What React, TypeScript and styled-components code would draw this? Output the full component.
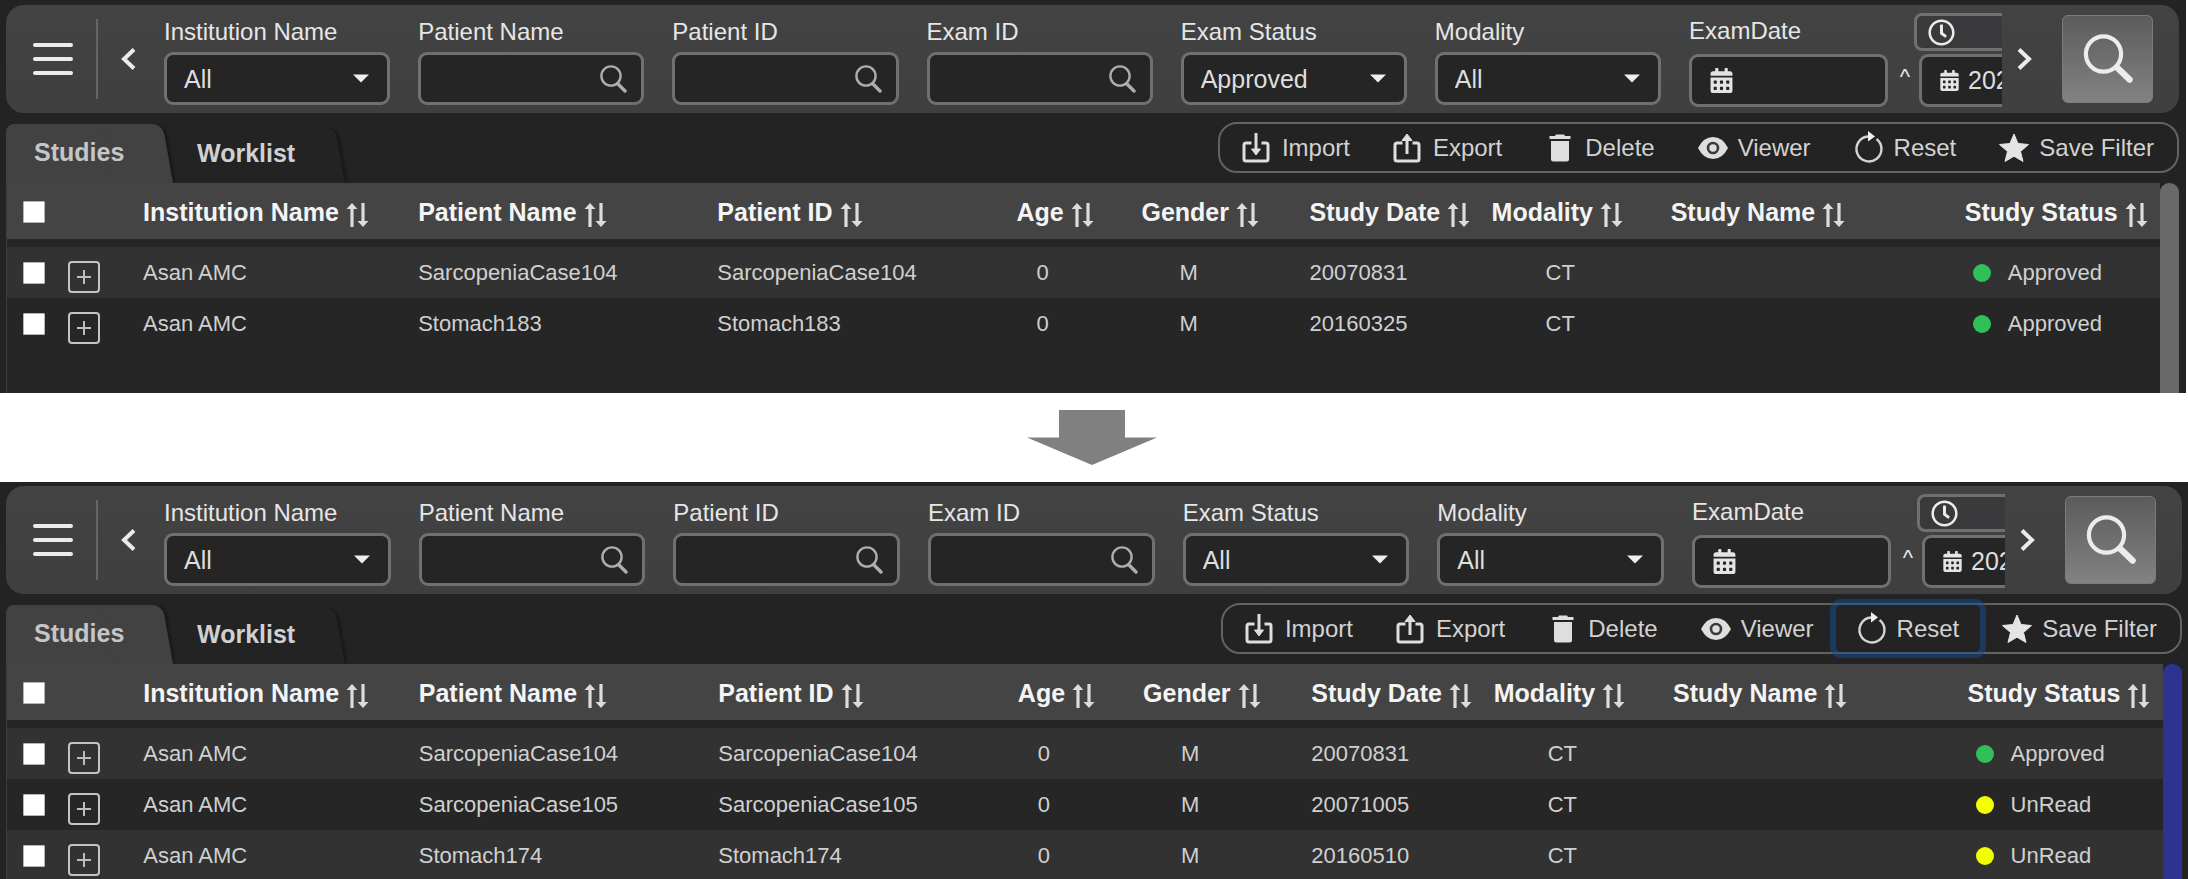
import React, { useId } from "react";
import styled, { createGlobalStyle } from "styled-components";
import { FaCalendarAlt, FaRegClock } from "react-icons/fa";

const GlobalStyle = createGlobalStyle`
  *, *::before, *::after { box-sizing: border-box; }
  body { margin: 0; background: #fff; }
  body, button, input, select { font-family: "Liberation Sans", Arial, sans-serif; }
`;

const Page = styled.main`
  display: flex;
  flex-direction: column;
  height: 100vh;
  overflow: hidden;
`;

const Panel = styled.section<{ $fill?: boolean }>`
  display: flex;
  flex-direction: column;
  flex: ${(p) => (p.$fill ? "1 1 0" : "none")};
  min-height: ${(p) => (p.$fill ? "0" : "393px")};
  overflow: hidden;
  margin-right: ${(p) => (p.$fill ? "0" : "2px")};
  padding: ${(p) => (p.$fill ? "4px 6px 0" : "5px 7px 0 6px")};
  background: #232323;
  color: #e6e6e6;
`;

const Transition = styled.div`
  display: flex;
  flex: none;
  align-items: center;
  justify-content: center;
  height: 89px;
  padding-right: 4px;
`;

const FilterBar = styled.form`
  display: flex;
  flex: none;
  align-items: center;
  height: 108px;
  border-radius: 18px;
  background: linear-gradient(#434343, #3f3f3f);
`;

const IconButton = styled.button`
  display: flex;
  flex: none;
  align-items: center;
  justify-content: center;
  padding: 0;
  border: 0;
  background: none;
  color: #ececec;
`;

const MenuButton = styled(IconButton)`
  width: 90px;
  height: 80px;
  padding-left: 3px;
`;

const Divider = styled.span`
  flex: none;
  width: 2px;
  height: 80px;
  background: #666;
`;

const PrevButton = styled(IconButton)`
  width: 60px;
  height: 80px;
`;

const NextButton = styled(IconButton)`
  width: 45px;
  height: 80px;
`;

const SearchButton = styled(IconButton)`
  width: 91px;
  height: 88px;
  margin: 0 26px 0 15px;
  border: 1px solid #7c7c7c;
  border-radius: 6px;
  background: linear-gradient(#5c5c5c, #828282);
`;

const Strip = styled.div`
  display: flex;
  flex: 1 1 0;
  min-width: 0;
  align-self: stretch;
  align-items: flex-start;
  gap: 28px;
  margin-left: 6px;
  overflow: hidden;
`;

const Field = styled.div`
  display: flex;
  flex: 1 1 0;
  min-width: 0;
  flex-direction: column;
  gap: 6px;
  padding-top: 13px;
`;

const Label = styled.label`
  font-size: 24px;
  line-height: 28px;
  white-space: nowrap;
`;

const Control = styled.div<{ $width?: number }>`
  position: relative;
  display: flex;
  flex: none;
  align-items: center;
  width: ${(p) => (p.$width ? `${p.$width}px` : "100%")};
  height: 53px;
  border: 3px solid #707070;
  border-radius: 9px;
  background: #252525;
  overflow: hidden;
`;

const Select = styled.select`
  width: 100%;
  height: 100%;
  padding: 0 40px 0 17px;
  border: 0;
  appearance: none;
  background: none;
  color: #dedede;
  font-size: 25px;
`;

const Caret = styled.svg`
  position: absolute;
  right: 18px;
  top: 19px;
  pointer-events: none;
`;

const TextInput = styled.input`
  flex: 1 1 0;
  min-width: 0;
  height: 100%;
  padding: 0 0 0 17px;
  border: 0;
  outline: 0;
  background: none;
  color: #dedede;
  font-size: 25px;
`;

const FieldSearch = styled(IconButton)`
  width: 28px;
  height: 28px;
  margin: 0 14px 0 0;
  color: #adadad;
`;

const DateGroup = styled.div`
  display: flex;
  flex: 0 0 313px;
  flex-direction: column;
  gap: 3px;
  padding-top: 8px;
  overflow: hidden;
`;

const DateRow = styled.div`
  display: flex;
  align-items: center;
`;

const DateLabel = styled(Label)`
  flex: 0 0 225px;
  padding-bottom: 2px;
`;

const ClockButton = styled(IconButton)`
  justify-content: flex-start;
  width: 230px;
  height: 38px;
  padding-left: 11px;
  border: 3px solid #707070;
  border-radius: 8px;
  background: #3a3a3c;
`;

const DateControl = styled(Control)`
  padding-left: 17px;
`;

const DateInput = styled(TextInput)`
  padding-left: 8px;
`;

const RangeMark = styled.span`
  flex: 0 0 31px;
  padding: 0 0 8px 3px;
  text-align: center;
  font-size: 22px;
  line-height: 28px;
`;

const TabBar = styled.div`
  display: flex;
  flex: none;
  justify-content: space-between;
  height: 70px;
`;

const Tabs = styled.div`
  display: flex;
  align-items: flex-end;
`;

const Tab = styled.button<{ $active?: boolean }>`
  position: relative;
  isolation: isolate;
  z-index: ${(p) => (p.$active ? 1 : 0)};
  width: ${(p) => (p.$active ? "167px" : "172px")};
  height: ${(p) => (p.$active ? "59px" : "56px")};
  padding: 0 0 3px ${(p) => (p.$active ? "28px" : "24px")};
  border: 0;
  background: none;
  color: ${(p) => (p.$active ? "#c6c6c6" : "#d0d0d0")};
  font-size: 25px;
  font-weight: bold;
  text-align: left;

  &::before,
  &::after {
    content: "";
    position: absolute;
    z-index: -1;
    top: 0;
    bottom: 0;
    background: ${(p) => (p.$active ? "#424242" : "#232323")};
  }
  &::before {
    left: 0;
    right: 40px;
    border-radius: 8px 0 0 0;
  }
  &::after {
    right: 0;
    width: 60px;
    border-radius: 0 10px 0 0;
    transform: skewX(10deg);
    transform-origin: bottom;
    box-shadow: 3px 0 3px -1px #161616;
    clip-path: inset(0 -8px 0 0);
  }
`;

const Toolbar = styled.div`
  display: flex;
  gap: 1px;
  height: 51px;
  margin-top: 9px;
  padding: 0 2px 0 1px;
  border: 2px solid #636363;
  border-radius: 19px;
`;

const ToolButton = styled.button<{ $focused?: boolean }>`
  display: flex;
  align-items: center;
  gap: 10px;
  padding: 0 21px;
  border: 0;
  border-radius: 5px;
  background: none;
  color: #d2d2d2;
  font-size: 24px;
  line-height: 28px;
  box-shadow: ${(p) => (p.$focused ? "0 0 0 6px rgba(20, 80, 150, 0.5)" : "none")};
`;

const TableArea = styled.div`
  display: flex;
  flex: 1 1 0;
  min-height: 0;
  border-left: 1px solid #3c3c3c;
`;

const TableScroll = styled.div`
  flex: 1 1 0;
  min-width: 0;
  overflow: hidden;
  background: #262626;
`;

const ScrollThumb = styled.div<{ $color: string }>`
  flex: none;
  width: 19px;
  border-radius: 9px 9px 0 0;
  background: ${(p) => p.$color};
`;

const Table = styled.table`
  width: 100%;
  table-layout: fixed;
  border-collapse: separate;
  border-spacing: 0;
`;

const HeadCell = styled.th`
  height: 64px;
  padding: 2px 0 0;
  border-bottom: 8px solid #262626;
  background: #444;
  color: #f4f4f4;
  font-size: 25px;
  font-weight: bold;
  text-align: left;
  white-space: nowrap;
`;

const SortHeader = styled.button`
  display: flex;
  gap: 7px;
  padding: 0;
  border: 0;
  background: none;
  color: inherit;
  font: inherit;
  line-height: 28px;
`;

const SortIcon = styled.svg`
  flex: none;
  margin-top: 5px;
`;

const Row = styled.tr`
  height: 51px;
  &:nth-child(odd) { background: #323232; }
`;

const Cell = styled.td<{ $indent?: number }>`
  padding: 0 0 0 ${(p) => p.$indent ?? 0}px;
  color: #d0d0d0;
  font-size: 22px;
  white-space: nowrap;
`;

const ExpandCell = styled.td`
  padding: 8px 0 0;
`;

const CheckCell = styled.td`
  padding: 0 0 0 16px;
`;

const CheckHead = styled(HeadCell)`
  padding-left: 16px;
`;

const CheckBox = styled.input`
  display: block;
  width: 22px;
  height: 22px;
  margin: 0;
  appearance: none;
  border: 1px solid #b5b5b5;
  border-radius: 1px;
  background: #fff;
`;

const ExpandButton = styled(IconButton)`
  width: 32px;
  height: 32px;
  border: 2px solid #c4c4c4;
  border-radius: 4px;
  color: #bdbdbd;
`;

const Status = styled.span`
  display: flex;
  align-items: center;
  gap: 17px;
`;

const Dot = styled.span<{ $color: string }>`
  width: 18px;
  height: 18px;
  border-radius: 50%;
  background: ${(p) => p.$color};
`;

const Magnifier = () => (
  <svg width="28" height="28" viewBox="0 0 28 28" fill="none" stroke="currentColor" strokeLinecap="round">
    <circle cx="12" cy="11" r="9.6" strokeWidth="2.4" />
    <path d="M18.5 18.5 26 26" strokeWidth="3.4" />
  </svg>
);

const SelectField = ({ label, value }: { label: string; value: string }) => {
  const id = useId();
  return (
    <Field>
      <Label htmlFor={id}>{label}</Label>
      <Control>
        <Select id={id} defaultValue={value}>
          <option>{value}</option>
        </Select>
        <Caret width="16" height="9" viewBox="0 0 16 9">
          <path d="M0 0.5h16L8 8.5z" fill="#efefef" />
        </Caret>
      </Control>
    </Field>
  );
};

const SearchField = ({ label }: { label: string }) => {
  const id = useId();
  return (
    <Field>
      <Label htmlFor={id}>{label}</Label>
      <Control>
        <TextInput id={id} type="text" />
        <FieldSearch type="button" aria-label={`Search ${label}`}>
          <Magnifier />
        </FieldSearch>
      </Control>
    </Field>
  );
};

const tools: { name: string; icon: React.ReactNode }[] = [
  {
    name: "Import",
    icon: (
      <g fill="none" stroke="#dedede" strokeWidth="3" strokeLinejoin="round">
        <path d="M9.5 10H4q-2 0-2 2v14q0 2 2 2h20q2 0 2-2V12q0-2-2-2h-4.500" />
        <path d="M14 0v18" />
        <path d="M9.500 16h9L14 22z" fill="#dedede" strokeWidth="1" />
      </g>
    ),
  },
  {
    name: "Export",
    icon: (
      <g fill="none" stroke="#dedede" strokeWidth="3" strokeLinejoin="round">
        <path d="M9.5 10H4q-2 0-2 2v14q0 2 2 2h20q2 0 2-2V12q0-2-2-2h-4.500" />
        <path d="M14 5v16" />
        <path d="M9 7.500h10L14 1z" fill="#dedede" strokeWidth="1" />
      </g>
    ),
  },
  {
    name: "Delete",
    icon: (
      <g fill="#dedede">
        <path d="M11 1.500h8l1 1.500h5.500v3h-21V3H10z" />
        <path d="M6 8h18v18q0 2.500-2.500 2.500h-13Q6 28.500 6 26z" />
      </g>
    ),
  },
  {
    name: "Viewer",
    icon: (
      <g>
        <path d="M0 15Q5.500 4 15 4t15 11Q24.500 26 15 26T0 15z" fill="#dedede" />
        <circle cx="15" cy="15" r="5" fill="#dedede" stroke="#3a3a3a" strokeWidth="2.600" />
      </g>
    ),
  },
  {
    name: "Reset",
    icon: (
      <g>
        <path d="M22.500 6A12.500 12.500 0 1 1 14 3.500" fill="none" stroke="#d4d4d4" strokeWidth="2.400" />
        <path d="M14-2 21 3.500 14 8.500z" fill="#f0f0f0" />
      </g>
    ),
  },
  {
    name: "Save Filter",
    icon: (
      <path
        d="M15 1 19 10.500 29.500 11.500 21.500 18.500 24 28.500 15 23.200 6 28.500 8.500 18.500 0.500 11.500 11 10.500z"
        fill="#e4e4e4"
        stroke="#e4e4e4"
        strokeWidth="1"
        strokeLinejoin="round"
      />
    ),
  },
];

const columns: [string, number][] = [
  ["Institution Name", 275],
  ["Patient Name", 299],
  ["Patient ID", 299],
  ["Age", 125],
  ["Gender", 168],
  ["Study Date", 182],
  ["Modality", 179],
  ["Study Name", 294],
  ["Study Status", 195],
];

type Study = { patient: string; date: string; status: "Approved" | "UnRead" };

const StudyRow = ({ study }: { study: Study }) => (
  <Row>
    <CheckCell>
      <CheckBox type="checkbox" aria-label={`Select ${study.patient}`} />
    </CheckCell>
    <ExpandCell>
      <ExpandButton type="button" aria-label={`Expand ${study.patient}`}>
        <svg width="14" height="14" viewBox="0 0 14 14" stroke="currentColor" strokeWidth="2">
          <path d="M7 0v14M0 7h14" />
        </svg>
      </ExpandButton>
    </ExpandCell>
    <Cell>Asan AMC</Cell>
    <Cell>{study.patient}</Cell>
    <Cell>{study.patient}</Cell>
    <Cell $indent={20}>0</Cell>
    <Cell $indent={38}>M</Cell>
    <Cell>{study.date}</Cell>
    <Cell $indent={54}>CT</Cell>
    <Cell />
    <Cell $indent={8}>
      <Status>
        <Dot $color={study.status === "Approved" ? "#2fc05a" : "#f2ff00"} />
        {study.status}
      </Status>
    </Cell>
  </Row>
);

type BrowserProps = {
  examStatus: string;
  studies: Study[];
  thumb: string;
  focusedTool?: string;
  fill?: boolean;
};

const StudyBrowser = ({ examStatus, studies, thumb, focusedTool, fill }: BrowserProps) => {
  const dateId = useId();
  return (
    <Panel $fill={fill}>
      <FilterBar onSubmit={(e) => e.preventDefault()}>
        <MenuButton type="button" aria-label="Menu">
          <svg width="40" height="34" viewBox="0 0 40 34" stroke="currentColor" strokeWidth="4" strokeLinecap="round">
            <path d="M2 3h36M2 17h36M2 31h36" />
          </svg>
        </MenuButton>
        <Divider />
        <PrevButton type="button" aria-label="Previous filters">
          <svg width="16" height="22" viewBox="0 0 16 22" fill="none" stroke="currentColor" strokeWidth="4">
            <path d="M14 1.500 4 11l10 9.500" />
          </svg>
        </PrevButton>
        <Strip>
          <SelectField label="Institution Name" value="All" />
          <SearchField label="Patient Name" />
          <SearchField label="Patient ID" />
          <SearchField label="Exam ID" />
          <SelectField label="Exam Status" value={examStatus} />
          <SelectField label="Modality" value="All" />
          <DateGroup>
            <DateRow>
              <DateLabel htmlFor={dateId}>ExamDate</DateLabel>
              <ClockButton type="button" aria-label="Time">
                <FaRegClock size={27} />
              </ClockButton>
            </DateRow>
            <DateRow>
              <DateControl $width={199}>
                <FaCalendarAlt size={25} color="#e4e4e4" />
                <DateInput id={dateId} type="text" />
              </DateControl>
              <RangeMark>^</RangeMark>
              <DateControl $width={199}>
                <FaCalendarAlt size={21} color="#e4e4e4" />
                <DateInput type="text" aria-label="ExamDate end" defaultValue="202" />
              </DateControl>
            </DateRow>
          </DateGroup>
        </Strip>
        <NextButton type="button" aria-label="Next filters">
          <svg width="16" height="22" viewBox="0 0 16 22" fill="none" stroke="currentColor" strokeWidth="4">
            <path d="M2 1.500 12 11 2 20.500" />
          </svg>
        </NextButton>
        <SearchButton type="submit" aria-label="Search">
          <svg width="50" height="50" viewBox="0 0 50 50" fill="none" stroke="#ececec" strokeLinecap="round">
            <circle cx="20.500" cy="20" r="17.600" strokeWidth="4.200" />
            <path d="M34 33.500 46.500 45.500" strokeWidth="6.500" />
          </svg>
        </SearchButton>
      </FilterBar>
      <TabBar>
        <Tabs role="tablist">
          <Tab role="tab" aria-selected $active>
            Studies
          </Tab>
          <Tab role="tab" aria-selected={false}>
            Worklist
          </Tab>
        </Tabs>
        <Toolbar>
          {tools.map((tool) => (
            <ToolButton key={tool.name} type="button" $focused={tool.name === focusedTool}>
              <svg width="30" height="30" viewBox="0 0 30 30" overflow="visible">
                {tool.icon}
              </svg>
              {tool.name}
            </ToolButton>
          ))}
        </Toolbar>
      </TabBar>
      <TableArea>
        <TableScroll>
          <Table>
            <colgroup>
              <col style={{ width: 61 }} />
              <col style={{ width: 75 }} />
              {columns.map(([name, width]) => (
                <col key={name} style={{ width }} />
              ))}
            </colgroup>
            <thead>
              <tr>
                <CheckHead>
                  <CheckBox type="checkbox" aria-label="Select all studies" />
                </CheckHead>
                <HeadCell />
                {columns.map(([name]) => (
                  <HeadCell key={name}>
                    <SortHeader type="button">
                      {name}
                      <SortIcon width="23" height="24" viewBox="0 0 23 24" stroke="#dcdcdc" fill="#dcdcdc">
                        <path d="M6 4v20M17 0v20" strokeWidth="3.200" />
                        <path d="M6 0 0.500 6h11zM17 24 11.500 18h11z" stroke="none" />
                      </SortIcon>
                    </SortHeader>
                  </HeadCell>
                ))}
              </tr>
            </thead>
            <tbody>
              {studies.map((study) => (
                <StudyRow key={study.patient} study={study} />
              ))}
            </tbody>
          </Table>
        </TableScroll>
        <ScrollThumb $color={thumb} />
      </TableArea>
    </Panel>
  );
};

const App = () => (
  <>
    <GlobalStyle />
    <Page>
      <StudyBrowser
        examStatus="Approved"
        thumb="#696969"
        studies={[
          { patient: "SarcopeniaCase104", date: "20070831", status: "Approved" },
          { patient: "Stomach183", date: "20160325", status: "Approved" },
        ]}
      />
      <Transition>
        <svg width="130" height="55" viewBox="0 0 130 55" aria-hidden="true">
          <path d="M32 0h66v27.500h32L65 55 0 27.500h32z" fill="#808080" />
        </svg>
      </Transition>
      <StudyBrowser
        fill
        examStatus="All"
        thumb="#2d3391"
        focusedTool="Reset"
        studies={[
          { patient: "SarcopeniaCase104", date: "20070831", status: "Approved" },
          { patient: "SarcopeniaCase105", date: "20071005", status: "UnRead" },
          { patient: "Stomach174", date: "20160510", status: "UnRead" },
        ]}
      />
    </Page>
  </>
);

export default App;
